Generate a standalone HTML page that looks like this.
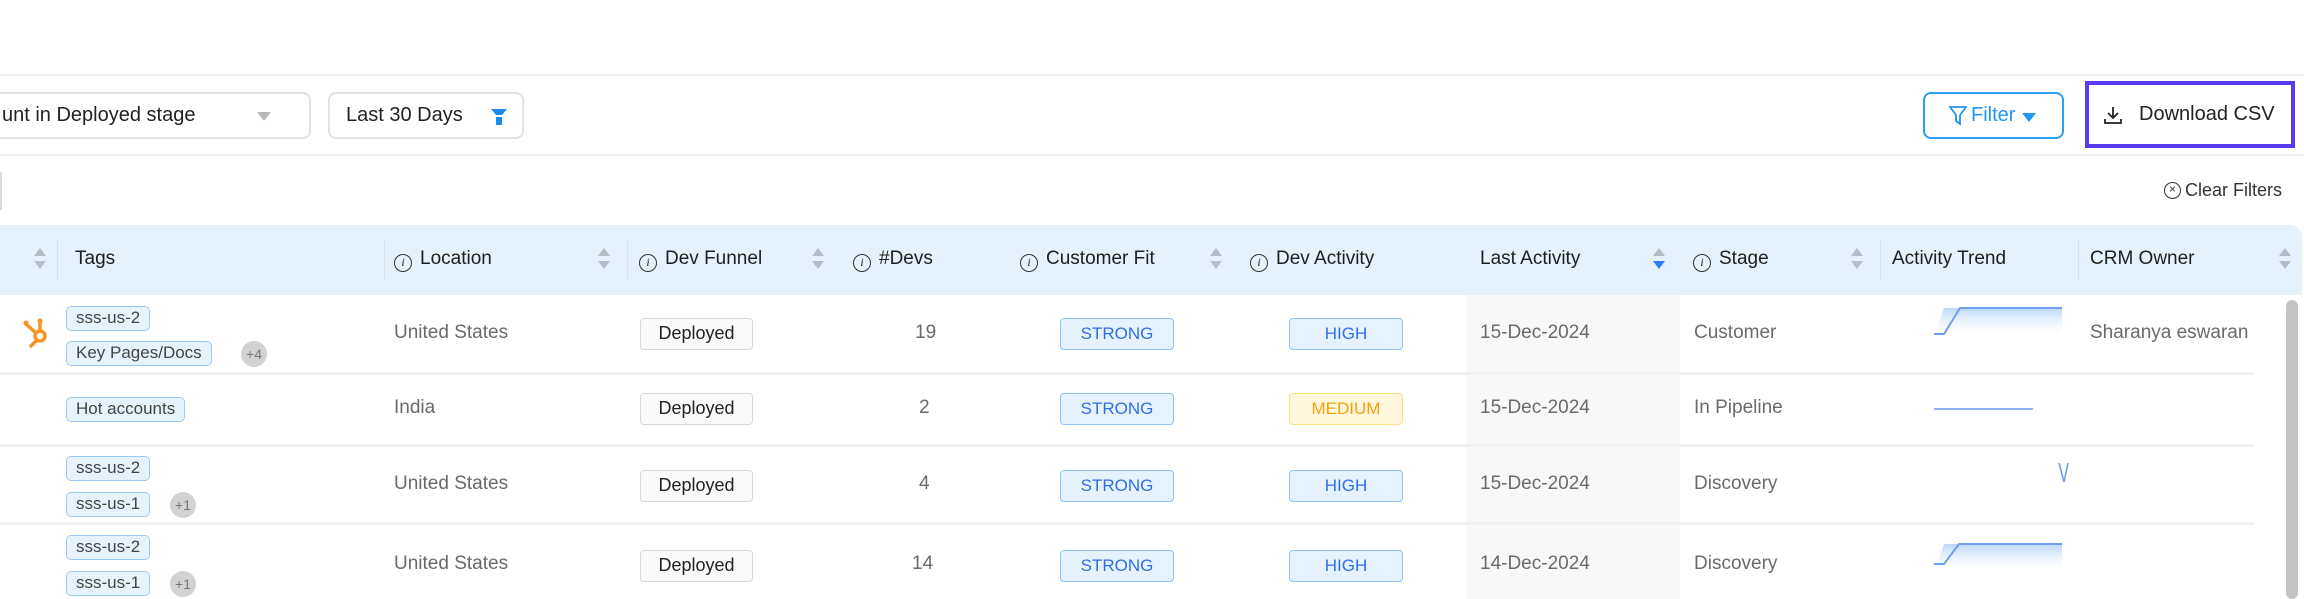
<!DOCTYPE html>
<html><head><meta charset="utf-8"><style>
*{box-sizing:border-box;margin:0;padding:0}
body{width:2304px;height:599px;overflow:hidden;background:#fff;font-family:"Liberation Sans",sans-serif;position:relative;color:#222}
.a{position:absolute}
.line{position:absolute;left:0;width:2304px;height:2px;background:#efefef}
.box{position:absolute;border:2px solid #e2e2e2;border-radius:8px;background:#fff;font-size:20px;color:#222;display:flex;align-items:center}
.hd{position:absolute;top:225px;left:0;width:2302px;height:70px;background:#e5f1fd;border-top-right-radius:12px}
.ht{position:absolute;top:248px;font-size:19px;color:#1e1e1e;font-weight:500;white-space:nowrap}
.sort{position:absolute;top:248px;width:12px;height:22px}
.sort:before{content:"";position:absolute;left:0;top:0;border:6px solid transparent;border-bottom:8px solid #b5bcc4;border-top:0}
.sort:after{content:"";position:absolute;left:0;top:13px;border:6px solid transparent;border-top:8px solid #b5bcc4;border-bottom:0}
.sort.dn:after{border-top-color:#2e7cf6}
.info{display:inline-block;width:18px;height:18px;border:1.6px solid #333;border-radius:50%;font-size:12px;text-align:center;line-height:15px;font-style:italic;font-family:"Liberation Serif",serif;margin-right:8px;vertical-align:-2px}
.sep{position:absolute;top:240px;width:1px;height:40px;background:#d6e4f1}
.rl{position:absolute;left:0;width:2254px;height:3px;background:#f1f1f1}
.t{position:absolute;font-size:19px;color:#6a6a6a;white-space:nowrap}
.tag{position:absolute;height:25px;border:1.5px solid #9ccaf5;background:#e6f3ff;border-radius:5px;font-size:17px;color:#444;padding:0 9px;line-height:22px;white-space:nowrap}
.more{position:absolute;width:26px;height:26px;border-radius:50%;background:#d2d2d2;color:#777;font-size:14px;text-align:center;line-height:26px}
.dep{position:absolute;left:640px;width:113px;height:32px;border:1.5px solid #d8d8d8;border-radius:4px;background:#fafafa;font-size:18px;color:#222;text-align:center;line-height:29px}
.bd{position:absolute;width:114px;height:32px;border:1.5px solid #8fc2f6;border-radius:4px;background:#e6f3ff;color:#2f6fe0;font-size:17px;text-align:center;line-height:29px}
.bd.m{border-color:#fbe08a;background:#fff8dc;color:#f3a10f}
</style></head><body>
<div class="line" style="top:74px"></div>
<div class="line" style="top:154px"></div>
<div class="box" style="left:-20px;top:92px;width:331px;height:47px;padding-left:20px">unt in Deployed stage
<span class="a" style="left:275px;top:18px;border:7px solid transparent;border-top:9px solid #b8b8b8;border-bottom:0"></span></div>
<div class="box" style="left:328px;top:92px;width:196px;height:47px;padding-left:16px">Last 30 Days
<svg class="a" style="left:161px;top:15px" width="16" height="17" viewBox="0 0 16 17"><path d="M0 0H16L11 6H5Z" fill="#1a8cf0"/><rect x="5" y="8" width="6" height="8" fill="#1a8cf0"/></svg></div>
<div class="box" style="left:1923px;top:92px;width:141px;height:47px;border-color:#2ba0f0;color:#2196f3;padding-left:24px">
<svg width="18" height="20" viewBox="0 0 18 20" style="margin-right:4px"><path d="M1 1H17L11 9V18L7 15V9Z" fill="none" stroke="#2196f3" stroke-width="1.8"/></svg>Filter
<span style="margin-left:7px;border:7px solid transparent;border-top:9px solid #2196f3;border-bottom:0;margin-top:4px"></span></div>
<div class="a" style="left:2085px;top:81px;width:210px;height:67px;border:4px solid #5a3bf0;display:flex;align-items:center;padding-left:14px;font-size:20px;color:#222">
<svg width="20" height="20" viewBox="0 0 20 20" style="margin-right:16px"><path d="M10 2V13M5 8L10 13L15 8M2 14V18H18V14" fill="none" stroke="#222" stroke-width="1.8"/></svg>Download CSV</div>
<div class="a" style="left:2164px;top:180px;font-size:18px;color:#333;display:flex;align-items:center">
<span style="width:17px;height:17px;border:1.5px solid #333;border-radius:50%;font-size:12px;line-height:13px;text-align:center;margin-right:4px">×</span>Clear Filters</div>
<div class="a" style="left:0;top:172px;width:2px;height:38px;background:#ddd"></div>

<div class="hd"></div>
<div class="sort" style="left:34px"></div>
<div class="sep" style="left:57px"></div>
<div class="ht" style="left:75px">Tags</div>
<div class="sep" style="left:384px"></div>
<div class="ht" style="left:394px"><span class="info">i</span>Location</div>
<div class="sort" style="left:598px"></div>
<div class="sep" style="left:627px"></div>
<div class="ht" style="left:639px"><span class="info">i</span>Dev Funnel</div>
<div class="sort" style="left:812px"></div>
<div class="ht" style="left:853px"><span class="info">i</span>#Devs</div>
<div class="ht" style="left:1020px"><span class="info">i</span>Customer Fit</div>
<div class="sort" style="left:1210px"></div>
<div class="ht" style="left:1250px"><span class="info">i</span>Dev Activity</div>
<div class="ht" style="left:1480px">Last Activity</div>
<div class="sort dn" style="left:1653px"></div>
<div class="ht" style="left:1693px"><span class="info">i</span>Stage</div>
<div class="sort" style="left:1851px"></div>
<div class="sep" style="left:1880px"></div>
<div class="ht" style="left:1892px">Activity Trend</div>
<div class="sep" style="left:2078px"></div>
<div class="ht" style="left:2090px">CRM Owner</div>
<div class="sort" style="left:2279px"></div>

<div class="a" style="left:1467px;top:295px;width:213px;height:304px;background:#f8f8f8"></div>
<div class="rl" style="top:372px"></div>
<div class="rl" style="top:444px"></div>
<div class="rl" style="top:522px"></div>
<div class="a" style="left:2286px;top:300px;width:12px;height:299px;background:#c4c4c4;border-radius:6px"></div>

<svg class="a" style="left:22px;top:316px" width="30" height="32" viewBox="0 0 30 32"><g fill="none" stroke="#f79421" stroke-width="3.5" stroke-linecap="round"><circle cx="18" cy="20" r="5"/><path d="M18 15V6M14 17L4 8M15 24L9 30"/></g><circle cx="18" cy="5" r="2.5" fill="#f79421"/><circle cx="4" cy="7" r="2.5" fill="#f79421"/></svg>
<div class="tag" style="left:66px;top:306px">sss-us-2</div>
<div class="tag" style="left:66px;top:341px">Key Pages/Docs</div>
<div class="more" style="left:241px;top:341px">+4</div>
<div class="t" style="left:394px;top:322px">United States</div>
<div class="dep" style="top:318px">Deployed</div>
<div class="t" style="left:915px;top:322px">19</div>
<div class="bd" style="left:1060px;top:318px">STRONG</div>
<div class="bd" style="left:1289px;top:318px">HIGH</div>
<div class="t" style="left:1480px;top:322px">15-Dec-2024</div>
<div class="t" style="left:1694px;top:322px">Customer</div>
<svg class="a" style="left:1934px;top:306px" width="130" height="32"><defs><linearGradient id="g" x1="0" y1="0" x2="0" y2="1"><stop offset="0" stop-color="#a9cdf8"/><stop offset="1" stop-color="#fff" stop-opacity="0"/></linearGradient></defs><path d="M10 2H128V32H0Z" fill="url(#g)" opacity=".8"/><path d="M0 28H10L26 2H128" fill="none" stroke="#6f9ef0" stroke-width="2"/></svg>
<div class="t" style="left:2090px;top:322px">Sharanya eswaran</div>

<div class="tag" style="left:66px;top:397px">Hot accounts</div>
<div class="t" style="left:394px;top:397px">India</div>
<div class="dep" style="top:393px">Deployed</div>
<div class="t" style="left:919px;top:397px">2</div>
<div class="bd" style="left:1060px;top:393px">STRONG</div>
<div class="bd m" style="left:1289px;top:393px">MEDIUM</div>
<div class="t" style="left:1480px;top:397px">15-Dec-2024</div>
<div class="t" style="left:1694px;top:397px">In Pipeline</div>
<div class="a" style="left:1934px;top:408px;width:99px;height:2px;background:#8fb3f2"></div>

<div class="tag" style="left:66px;top:456px">sss-us-2</div>
<div class="tag" style="left:66px;top:492px">sss-us-1</div>
<div class="more" style="left:170px;top:492px">+1</div>
<div class="t" style="left:394px;top:473px">United States</div>
<div class="dep" style="top:470px">Deployed</div>
<div class="t" style="left:919px;top:473px">4</div>
<div class="bd" style="left:1060px;top:470px">STRONG</div>
<div class="bd" style="left:1289px;top:470px">HIGH</div>
<div class="t" style="left:1480px;top:473px">15-Dec-2024</div>
<div class="t" style="left:1694px;top:473px">Discovery</div>
<svg class="a" style="left:2058px;top:462px" width="12" height="22"><path d="M1 1L6 20L10 1" fill="none" stroke="#6f9ef0" stroke-width="1.6"/></svg>

<div class="tag" style="left:66px;top:535px">sss-us-2</div>
<div class="tag" style="left:66px;top:571px">sss-us-1</div>
<div class="more" style="left:170px;top:571px">+1</div>
<div class="t" style="left:394px;top:553px">United States</div>
<div class="dep" style="top:550px">Deployed</div>
<div class="t" style="left:912px;top:553px">14</div>
<div class="bd" style="left:1060px;top:550px">STRONG</div>
<div class="bd" style="left:1289px;top:550px">HIGH</div>
<div class="t" style="left:1480px;top:553px">14-Dec-2024</div>
<div class="t" style="left:1694px;top:553px">Discovery</div>
<svg class="a" style="left:1934px;top:542px" width="130" height="32"><path d="M10 2H128V32H0Z" fill="url(#g)" opacity=".8"/><path d="M0 22H10L25 2H128" fill="none" stroke="#6f9ef0" stroke-width="2"/></svg>
</body></html>
